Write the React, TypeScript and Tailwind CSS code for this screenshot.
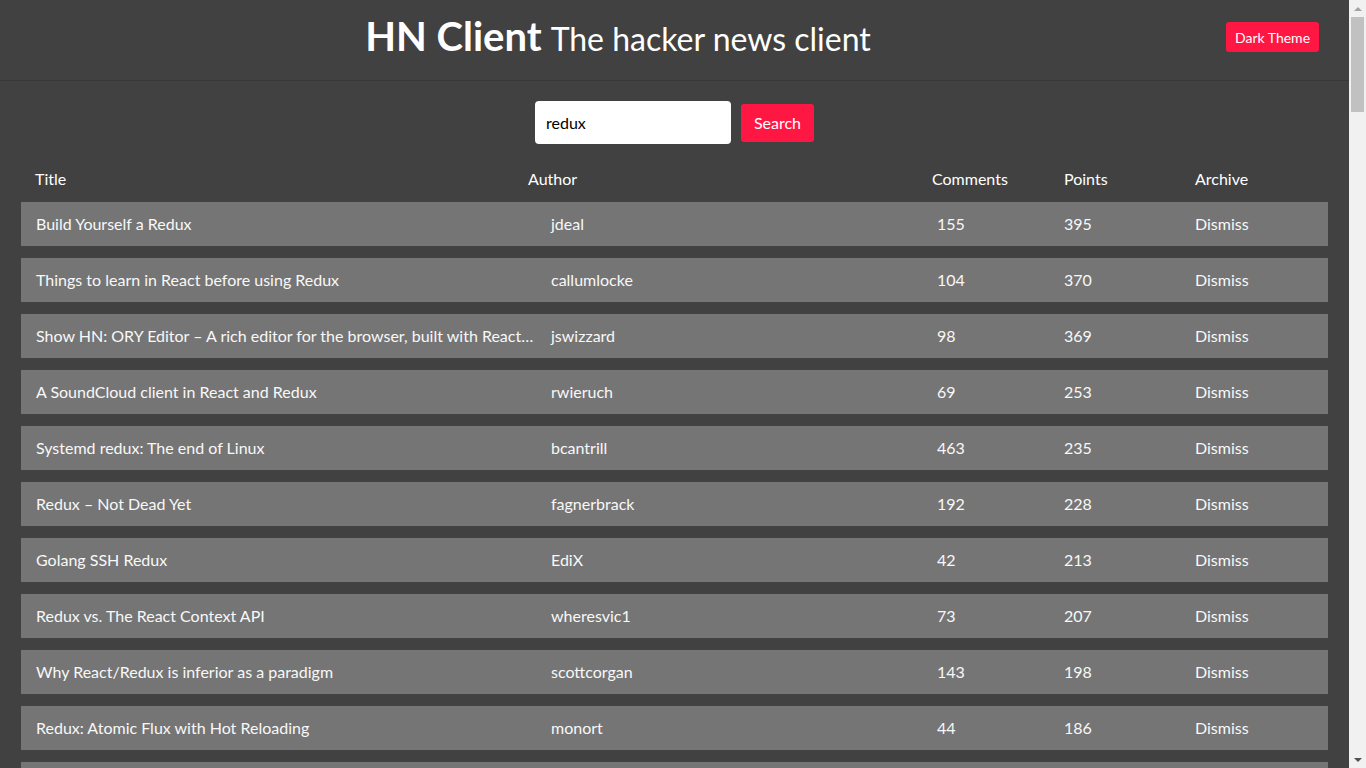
import React from "react";

const rows = [
  ["Build Yourself a Redux", "jdeal", "155", "395"],
  ["Things to learn in React before using Redux", "callumlocke", "104", "370"],
  ["Show HN: ORY Editor – A rich editor for the browser, built with React and Redux", "jswizzard", "98", "369"],
  ["A SoundCloud client in React and Redux", "rwieruch", "69", "253"],
  ["Systemd redux: The end of Linux", "bcantrill", "463", "235"],
  ["Redux – Not Dead Yet", "fagnerbrack", "192", "228"],
  ["Golang SSH Redux", "EdiX", "42", "213"],
  ["Redux vs. The React Context API", "wheresvic1", "73", "207"],
  ["Why React/Redux is inferior as a paradigm", "scottcorgan", "143", "198"],
  ["Redux: Atomic Flux with Hot Reloading", "monort", "44", "186"],
  ["Redux Saga", "tosh", "31", "180"],
];

export default function App() {
  return (
    <div className="flex h-screen overflow-hidden bg-[#414141]">
      <div
        className="w-[1349px] shrink-0 h-screen overflow-hidden text-white"
        style={{ fontFamily: '"Lato", "Open Sans", sans-serif' }}
      >
        <header className="flex items-center h-[81px] border-b border-[#383838] pl-[10px] pr-[30px] pb-[8px]">
          <h1 className="flex-1 text-center leading-none">
            <span className="text-[40px] font-bold">HN Client</span>
            <span className="text-[32px] ml-[9px]">The hacker news client</span>
          </h1>
          <button className="bg-[#ff1744] text-white text-[14px] rounded-[3px] w-[93px] h-[30px] mt-[2px]">
            Dark Theme
          </button>
        </header>

        <div className="flex justify-center items-center gap-[10px] mt-[20px]">
          <input
            readOnly
            value="redux"
            className="w-[196px] h-[43px] bg-white text-black rounded-[4px] px-[11px] text-[16px] outline-none"
          />
          <button className="bg-[#ff1744] text-white text-[16px] rounded-[3px] w-[73px] h-[38px]">
            Search
          </button>
        </div>

        <div className="mx-[21px] mt-[23px]">
          <div className="flex text-[16px] h-[24px] items-center">
            <div className="w-[507px] pl-[14px]">Title</div>
            <div className="w-[404px]">Author</div>
            <div className="w-[132px]">Comments</div>
            <div className="w-[131px]">Points</div>
            <div>Archive</div>
          </div>
          <div className="flex flex-col gap-[12px] mt-[11px] pb-[12px]">
            {rows.map((r, i) => (
              <div key={i} className="flex items-center h-[44px] bg-[#757575] text-[16px] text-[#f8f8f8]">
                <div className="w-[530px] pl-[15px] pr-[15px] shrink-0 whitespace-nowrap overflow-hidden text-ellipsis">
                  {r[0]}
                </div>
                <div className="w-[386px] shrink-0">{r[1]}</div>
                <div className="w-[127px] shrink-0">{r[2]}</div>
                <div className="w-[131px] shrink-0">{r[3]}</div>
                <div>Dismiss</div>
              </div>
            ))}
          </div>
        </div>
      </div>
      <div className="w-[17px] shrink-0 h-screen bg-[#f1f1f1] flex flex-col items-center">
        <div className="h-[17px] flex items-center justify-center">
          <div className="w-0 h-0 border-l-[4px] border-r-[4px] border-b-[4px] border-l-transparent border-r-transparent border-b-[#a3a3a3]" />
        </div>
        <div className="w-[13px] h-[95px] bg-[#c1c1c1]" />
        <div className="flex-1" />
        <div className="h-[17px] flex items-center justify-center">
          <div className="w-0 h-0 border-l-[4px] border-r-[4px] border-t-[4px] border-l-transparent border-r-transparent border-t-[#505050]" />
        </div>
      </div>
    </div>
  );
}
